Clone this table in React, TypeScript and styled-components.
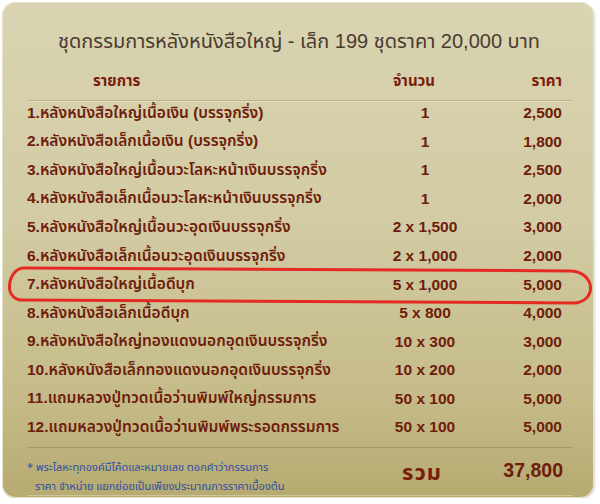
import styled, { createGlobalStyle } from "styled-components";

const GlobalStyle = createGlobalStyle`
  html, body {
    margin: 0;
    padding: 0;
    background: #ffffff;
  }
  body {
    font-family: "Liberation Sans", "Noto Sans Thai", "Noto Sans", sans-serif;
  }
`;

const Panel = styled.div`
  box-sizing: border-box;
  margin: 2px 0 0 2px;
  width: 592px;
  height: 496px;
  border-radius: 14px;
  background: linear-gradient(180deg, #d9d4b2 0%, #d2cba3 45%, #c5bb88 80%, #b6aa70 100%);
  box-shadow: 0 0 0 1px #e6e2c8 inset, 1px 1px 2px rgba(0, 0, 0, 0.15);
  padding: 24px 21px 0 25px;
  display: flex;
  flex-direction: column;
`;

const Title = styled.h1`
  margin: 0;
  text-align: center;
  font-size: 20px;
  font-weight: 400;
  color: #4a3b30;
  line-height: 30px;
  padding-right: 2px;
`;

const Table = styled.div`
  margin-top: 9px;
  display: flex;
  flex-direction: column;
`;

const Row = styled.div<{ highlight?: boolean }>`
  position: relative;
  display: grid;
  grid-template-columns: 1fr 130px 83px;
  align-items: center;
  height: 28.55px;
  color: #6e1c0c;
  font-size: 15.5px;
  font-weight: 600;

  ${props => props.highlight && `
    &::after {
      content: "";
      position: absolute;
      left: -19px;
      right: -19px;
      top: -2px;
      bottom: -4px;
      border: 3px solid #e32a23;
      border-radius: 16px 22px 18px 14px / 20px 18px 16px 14px;
      transform: rotate(0.3deg);
      pointer-events: none;
    }
  `}
`;

const HeadRow = styled(Row)`
  box-sizing: border-box;
  height: 36px;
  font-weight: 700;
  font-size: 15px;
  color: #7a1d0c;
  border-bottom: 1px solid #bdb385;
  box-shadow: 0 1px 0 #e2dcbf;
  margin-bottom: -2px;
  padding-bottom: 2px;
`;

const Cell = styled.div<{ align?: "left" | "center" | "right"; shift?: number }>`
  text-align: ${props => props.align || "left"};
  padding-right: ${props => (props.align === "right" ? "11px" : "0")};
  white-space: nowrap;
  ${props => props.shift ? `transform: translateX(${props.shift}px);` : ""}
`;

const HeadItem = styled(Cell)`
  padding-left: 66px;
`;

const Footer = styled.div`
  margin-top: 5px;
  border-top: 1px solid #a89c64;
  box-shadow: 0 -1px 0 #cfc79b inset;
  width: 546px;
  display: grid;
  grid-template-columns: 1fr 130px 83px;
  padding-top: 8px;
`;

const Note = styled.div`
  font-size: 11px;
  line-height: 19px;
  color: #2e4fa3;
  font-family: "Noto Sans Thai", "Noto Sans", sans-serif;
  white-space: nowrap;
  grid-column: 1 / 4;
  grid-row: 1;
  padding-top: 2px;
`;

const Indent = styled.span`
  display: block;
  padding-left: 8px;
`;

const TotalLabel = styled.div`
  grid-column: 2;
  grid-row: 1;
  text-align: center;
  font-size: 22px;
  font-weight: 700;
  color: #7a1d0c;
  letter-spacing: 1px;
  padding-top: 1px;
  padding-right: 6px;
`;

const TotalValue = styled.div`
  grid-column: 3;
  grid-row: 1;
  text-align: right;
  padding-right: 10px;
  font-size: 19.5px;
  font-weight: 700;
  color: #6e1c0c;
  padding-top: 3px;
`;

interface Item {
  name: string;
  qty: string;
  price: string;
}

const items: Item[] = [
  { name: "1.หลังหนังสือใหญ่เนื้อเงิน (บรรจุกริ่ง)", qty: "1", price: "2,500" },
  { name: "2.หลังหนังสือเล็กเนื้อเงิน (บรรจุกริ่ง)", qty: "1", price: "1,800" },
  { name: "3.หลังหนังสือใหญ่เนื้อนวะโลหะหน้าเงินบรรจุกริ่ง", qty: "1", price: "2,500" },
  { name: "4.หลังหนังสือเล็กเนื้อนวะโลหะหน้าเงินบรรจุกริ่ง", qty: "1", price: "2,000" },
  { name: "5.หลังหนังสือใหญ่เนื้อนวะอุดเงินบรรจุกริ่ง", qty: "2 x 1,500", price: "3,000" },
  { name: "6.หลังหนังสือเล็กเนื้อนวะอุดเงินบรรจุกริ่ง", qty: "2 x 1,000", price: "2,000" },
  { name: "7.หลังหนังสือใหญ่เนื้อดีบุก", qty: "5 x 1,000", price: "5,000" },
  { name: "8.หลังหนังสือเล็กเนื้อดีบุก", qty: "5 x 800", price: "4,000" },
  { name: "9.หลังหนังสือใหญ่ทองแดงนอกอุดเงินบรรจุกริ่ง", qty: "10 x 300", price: "3,000" },
  { name: "10.หลังหนังสือเล็กทองแดงนอกอุดเงินบรรจุกริ่ง", qty: "10 x 200", price: "2,000" },
  { name: "11.แถมหลวงปู่ทวดเนื้อว่านพิมพ์ใหญ่กรรมการ", qty: "50 x 100", price: "5,000" },
  { name: "12.แถมหลวงปู่ทวดเนื้อว่านพิมพ์พระรอดกรรมการ", qty: "50 x 100", price: "5,000" },
];

function App() {
  return (
    <>
      <GlobalStyle />
      <Panel>
        <Title>ชุดกรรมการหลังหนังสือใหญ่ - เล็ก 199 ชุดราคา 20,000 บาท</Title>
        <Table>
          <HeadRow>
            <HeadItem>รายการ</HeadItem>
            <Cell align="center" shift={-11}>จำนวน</Cell>
            <Cell align="right">ราคา</Cell>
          </HeadRow>
          {items.map((item, i) => (
            <Row key={i} highlight={i === 6}>
              <Cell>{item.name}</Cell>
              <Cell align="center">{item.qty}</Cell>
              <Cell align="right">{item.price}</Cell>
            </Row>
          ))}
        </Table>
        <Footer>
          <Note>
            * พระโลหะทุกองค์มีโค้ดและหมายเลข ตอกคำว่ากรรมการ
            <Indent>ราคา จำหน่าย แยกย่อยเป็นเพียงประมาณการราคาเบื้องต้น</Indent>
          </Note>
          <TotalLabel>รวม</TotalLabel>
          <TotalValue>37,800</TotalValue>
        </Footer>
      </Panel>
    </>
  );
}

export default App;
